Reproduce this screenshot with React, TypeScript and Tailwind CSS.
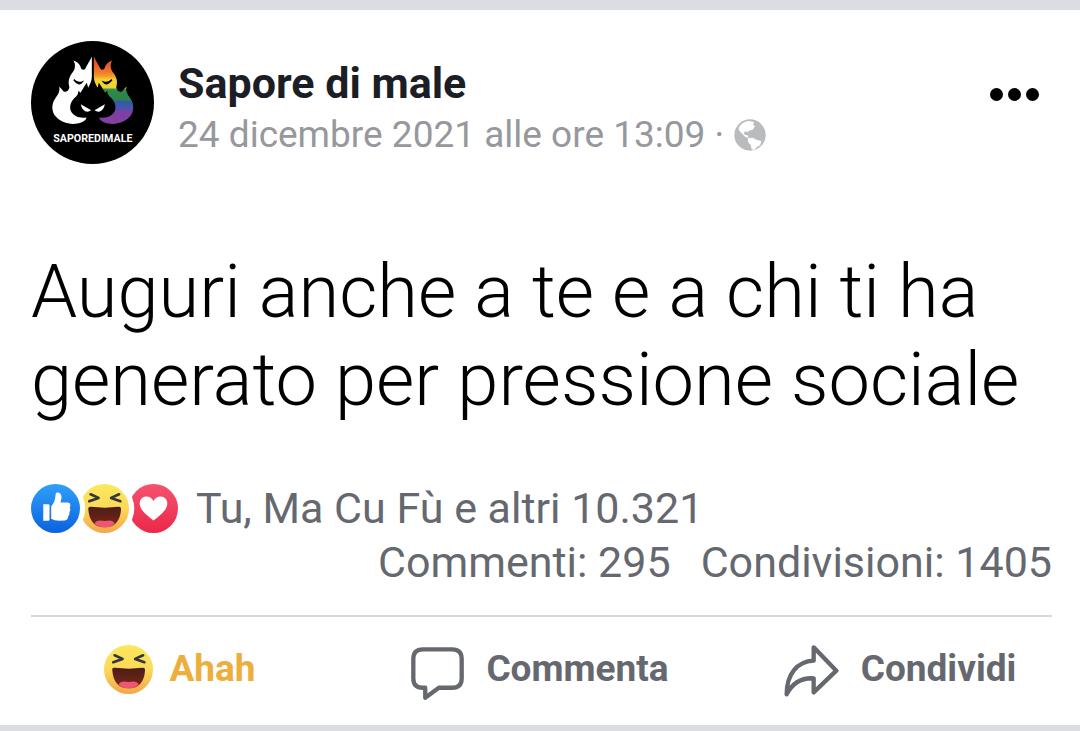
import React from 'react';

const Avatar: React.FC = () => (
  <svg viewBox="32 32 368 368" className="size-[123px] shrink-0" role="img" aria-label="Sapore di male">
    <defs>
      <linearGradient id="rainbow" x1="0" y1="75" x2="0" y2="280" gradientUnits="userSpaceOnUse">
        <stop offset="0.1" stopColor="#e8502c" />
        <stop offset="0.24" stopColor="#ee7a28" />
        <stop offset="0.3" stopColor="#f4962a" />
        <stop offset="0.35" stopColor="#f6d02f" />
        <stop offset="0.47" stopColor="#e8d638" />
        <stop offset="0.5" stopColor="#2f8a4b" />
        <stop offset="0.65" stopColor="#2b8150" />
        <stop offset="0.68" stopColor="#3558a8" />
        <stop offset="0.77" stopColor="#4456ac" />
        <stop offset="0.82" stopColor="#7d3fa5" />
        <stop offset="1" stopColor="#84419f" />
      </linearGradient>
      <path
        id="flame"
        d="M214 78C208 92 200 101 194 116C188 121 181 116 180 108C176 99 169 93 159 90C167 104 164 117 154 129C144 143 143 156 147 170C144 182 136 187 129 182C124 178 122 172 116 169C120 182 113 192 105 203C92 221 93 243 107 259C125 280 159 285 184 275C192 272 197 268 198 261C177 265 157 256 151 241C146 226 152 210 167 198C173 193 173 187 174 181L180 187C183 180 187 177 190 170L199 157L203 172C210 160 214 150 214 140Z"
      />
    </defs>
    <circle cx="216" cy="216" r="184" fill="#000" />
    <use href="#flame" fill="#fff" />
    <use href="#flame" fill="url(#rainbow)" transform="matrix(-1 0 0 1 434 0)" />
    <path d="M160 148Q171 160 186 154Q177 169 160 148ZM274 148Q263 160 248 154Q257 169 274 148Z" fill="#000" stroke="#000" strokeWidth="4" />
    <path d="M181 221L212 239Q203 246 194 242Q184 236 181 221ZM253 221L222 239Q231 246 240 242Q250 236 253 221Z" fill="#fff" />
    <text
      x="217"
      y="334"
      textAnchor="middle"
      fill="#fff"
      fontFamily="Roboto, sans-serif"
      fontWeight="700"
      fontSize="32"
    >
      SAPOREDIMALE
    </text>
  </svg>
);

const Globe: React.FC = () => (
  <svg viewBox="0 0 96 96" className="size-8" aria-hidden="true">
    <circle cx="48" cy="48" r="47" fill="#b9bbbd" />
    <path
      d="M18 20Q29 8 44 6L60 9L57 17L63 22L56 32L46 35L39 40L34 37L29 42L33 48L41 49L44 57L35 55L25 45L15 34L14 26Z"
      fill="#fff"
    />
    <path d="M42 58L56 56L67 62L82 66L79 78L68 85L61 93L53 91L50 78L42 69Z" fill="#fff" />
  </svg>
);

const Like: React.FC = () => (
  <svg viewBox="0 0 148 148" className="size-[49px]" role="img" aria-label="Mi piace">
    <defs>
      <linearGradient id="like" x1="0" y1="0" x2="0" y2="1">
        <stop stopColor="#2fa0f8" />
        <stop offset="1" stopColor="#0b62df" />
      </linearGradient>
    </defs>
    <circle cx="74" cy="74" r="74" fill="url(#like)" />
    <path d="M37 61H52Q56 61 56 65V107Q56 111 52 111H37Z" fill="#fff" />
    <path
      d="M61 68Q72 56 73 42L75 28Q77 24 83 26Q93 30 92 43L89 56H111Q120 57 119 65Q118 68 117 71Q120 76 118 81L116 85Q117 90 114 95L112 99Q112 108 102 110L85 111Q70 111 61 105Z"
      fill="#fff"
    />
  </svg>
);

const Haha: React.FC<{ id: string; cut?: boolean }> = ({ id, cut }) => (
  <svg viewBox="0 0 148 148" className="size-[49px]" aria-hidden="true">
    <defs>
      <linearGradient id={id} x1="0" y1="0" x2="0" y2="1">
        <stop stopColor="#fbe95c" />
        <stop offset="0.5" stopColor="#fbd958" />
        <stop offset="1" stopColor="#f3a64b" />
      </linearGradient>
      <linearGradient id={`${id}-mouth`} x1="0" y1="0" x2="0" y2="1">
        <stop stopColor="#4a1d16" />
        <stop offset="1" stopColor="#7c2718" />
      </linearGradient>
    </defs>
    <circle cx="74" cy="74" r="74" fill={`url(#${id})`} />
    {cut && <circle cx="-66" cy="74" r="82" fill="#fff" />}
    <path
      d="M25 76Q24 68 33 69Q75 74 116 69Q125 68 124 77Q120 130 75 131Q29 130 25 76Z"
      fill={`url(#${id}-mouth)`}
    />
    <path d="M44 119Q50 106 75 112Q99 106 105 119Q92 131 75 131Q57 131 44 119Z" fill="#ef5671" />
    <path
      d="M32 31L56 42L28 52M118 31L94 42L122 52"
      fill="none"
      stroke="#34363c"
      strokeWidth="8"
      strokeLinecap="round"
      strokeLinejoin="round"
    />
  </svg>
);

const Love: React.FC = () => (
  <svg viewBox="0 0 148 148" className="size-[49px]" aria-hidden="true">
    <defs>
      <linearGradient id="love" x1="0" y1="0" x2="0" y2="1">
        <stop stopColor="#f5536f" />
        <stop offset="1" stopColor="#ec2848" />
      </linearGradient>
    </defs>
    <circle cx="74" cy="74" r="74" fill="url(#love)" />
    <circle cx="-66" cy="74" r="82" fill="#fff" />
    <path
      d="M74 110Q66 105 52 92C38 80 30 66 33 53C38 34 64 33 74 51C84 33 110 34 115 53C118 66 110 80 96 92Q82 105 74 110Z"
      fill="#fff"
    />
  </svg>
);

const CommentIcon: React.FC = () => (
  <svg viewBox="0 0 160 160" className="mt-2 size-[53px]" fill="none" stroke="#65686f" strokeWidth="13" strokeLinejoin="round" aria-hidden="true">
    <path d="M36 7H124Q153 7 153 36V95Q153 123 124 123H84L43 153V123H36Q7 123 7 95V36Q7 7 36 7Z" />
  </svg>
);

const ShareIcon: React.FC = () => (
  <svg viewBox="0 0 165 156" className="mt-1 h-[52px] w-[55px]" fill="none" stroke="#65686f" strokeWidth="13" strokeLinejoin="round" aria-hidden="true">
    <path d="M89 7L157 77L89 142V100Q34 97 8 148C8 89 38 49 89 47Z" />
  </svg>
);

const App: React.FC = () => {
  return (
    <div className="bg-[#dcdde2] pt-2.5 pb-1.5 font-['Roboto',sans-serif]">
      <article className="bg-white">
        <header className="flex items-start px-[31px] pt-[31px]">
          <Avatar />
          <div className="ml-6 pt-[18px]">
            <h1 className="text-[43px] leading-[48px] font-bold text-[#1c1e26]">Sapore di male</h1>
            <p className="mt-1 flex items-center gap-2.5 text-[37px] leading-[48px] text-[#96989d]">
              24 dicembre 2021 alle ore 13:09 ·
              <Globe />
            </p>
          </div>
          <button type="button" aria-label="Altre opzioni" className="mt-[47px] mr-2.5 ml-auto flex gap-[5px]">
            <span className="size-[13px] rounded-full bg-black" />
            <span className="size-[13px] rounded-full bg-black" />
            <span className="size-[13px] rounded-full bg-black" />
          </button>
        </header>

        <p className="mt-[84px] px-[31px] text-[74px] leading-[88px] font-light text-black">
          Auguri anche a te e a chi ti ha generato per pressione sociale
        </p>

        <div className="mt-[57px] pr-7 pl-[31px] text-[43px] leading-[54px] text-[#65686f]">
          <div className="flex items-center">
            <Like />
            <Haha id="haha" cut />
            <Love />
            <span className="ml-[18px]">Tu, Ma Cu Fù e altri 10.321</span>
          </div>
          <div className="flex justify-end gap-[30px]">
            <span>Commenti: 295</span>
            <span>Condivisioni: 1405</span>
          </div>
        </div>

        <hr className="mt-[26px] mr-7 ml-[31px] border-t-2 border-[#d6d7da]" />

        <footer className="grid grid-cols-3 pt-[21px] pb-[25px] text-[37px] leading-[48px] font-bold text-[#65686f]">
          <button type="button" className="flex h-[62px] items-center justify-center gap-4 text-[#edae3b]">
            <Haha id="ahah" />
            Ahah
          </button>
          <button type="button" className="flex h-[62px] items-center justify-center gap-[22px]">
            <CommentIcon />
            Commenta
          </button>
          <button type="button" className="flex h-[62px] items-center justify-center gap-[22px]">
            <ShareIcon />
            Condividi
          </button>
        </footer>
      </article>
    </div>
  );
};

export default App;
